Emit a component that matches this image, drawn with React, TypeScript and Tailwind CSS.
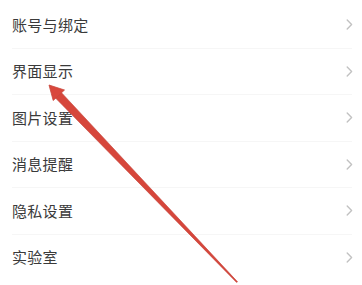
import React from "react";

const items = ["账号与绑定", "界面显示", "图片设置", "消息提醒", "隐私设置", "实验室"];

function Chevron() {
  return (
    <svg width="7" height="11" viewBox="0 0 7 11" fill="none">
      <path d="M1.2 1 L5.6 5.5 L1.2 10" stroke="#c2c2c2" strokeWidth="1.4" strokeLinecap="round" strokeLinejoin="round" />
    </svg>
  );
}

export default function App() {
  return (
    <div
      className="relative w-[362px] h-[285px] overflow-hidden bg-white"
      style={{ fontFamily: '"Noto Sans CJK SC", "Noto Sans", sans-serif' }}
    >
      <div className="flex flex-col pt-[2px]">
        {items.map((t, i) => (
          <div key={t} className="flex flex-col">
            <div className="flex items-center justify-between h-[45.5px] pl-[12px] pr-[9px]">
              <span className="text-[15px] text-[#3a3a3a] tracking-[0.3px]">{t}</span>
              <Chevron />
            </div>
            {i < items.length - 1 && <div className="h-px bg-[#f6f6f6] ml-[12px] mr-[10px]" />}
          </div>
        ))}
      </div>
      <svg className="absolute left-0 top-0" width="362" height="285" viewBox="0 0 362 285">
        <polygon points="55.3,97.8 61,92.2 237.5,281.8 236.6,282.4" fill="#d6463b" stroke="#c23c32" strokeWidth="0.6" />
        <polygon points="49,85 53.2,100.5 64.5,90" fill="#d9473c" stroke="#c9473c" strokeWidth="0.8" strokeLinejoin="round" />
      </svg>
    </div>
  );
}
